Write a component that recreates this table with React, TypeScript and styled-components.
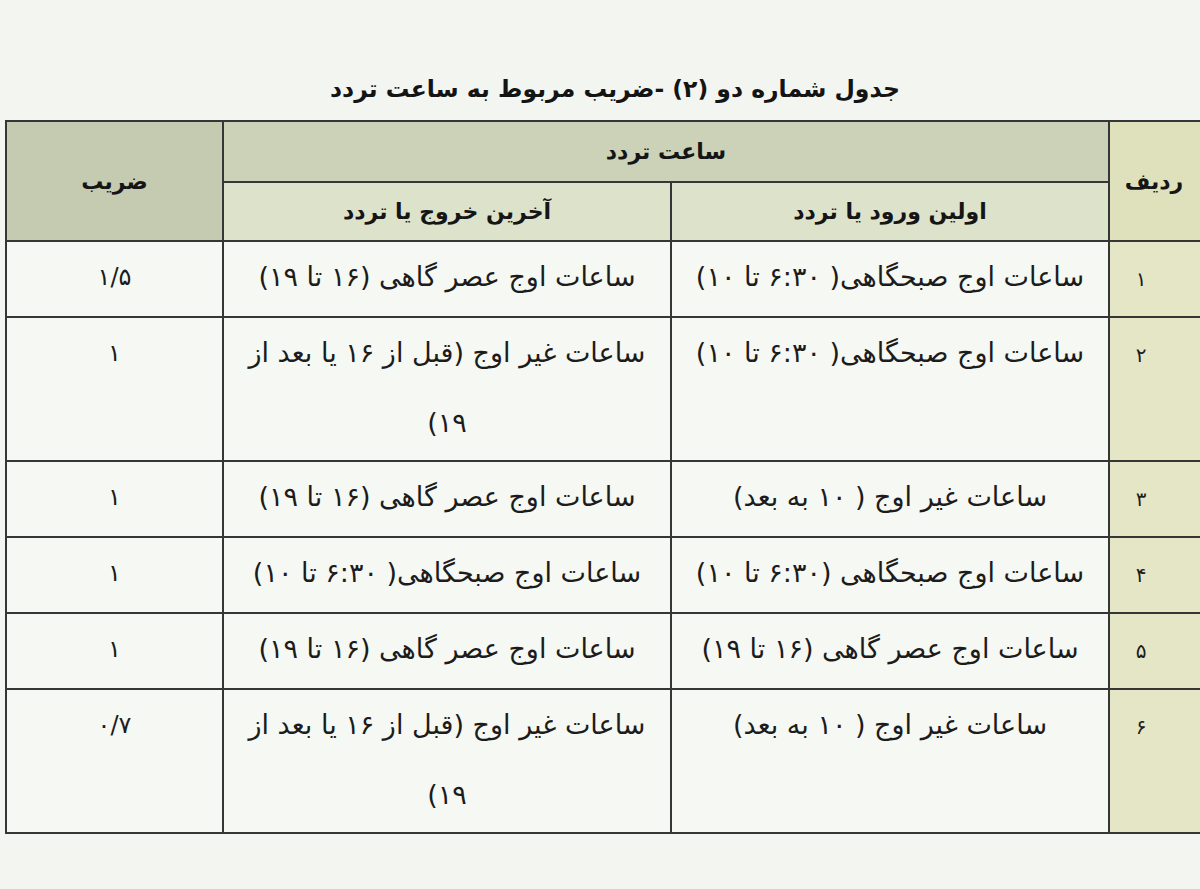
import React from "react";
import styled, { createGlobalStyle } from "styled-components";

const Global = createGlobalStyle`
  html, body {
    margin: 0;
    padding: 0;
    overflow: hidden;
    background: #f3f5f0;
  }
  body {
    font-family: "DejaVu Sans", "Noto Sans", sans-serif;
    color: #1f1f1f;
  }
`;

const Page = styled.div`
  width: 1200px;
  height: 889px;
  overflow: hidden;
  direction: ltr;
  padding-top: 72px;
  box-sizing: border-box;
`;

const Title = styled.h1`
  margin: 0 0 14px 0;
  padding-left: 30px;
  direction: rtl;
  text-align: center;
  font-size: 23.5px;
  font-weight: bold;
  line-height: 34px;
  color: #141414;
`;

const Table = styled.table`
  direction: rtl;
  border-collapse: collapse;
  table-layout: fixed;
  width: 1213px;
  margin-left: 5px;
  border: 2px solid #333;
`;

const HeadCell = styled.th<{ $tone: "dark" | "mid" | "light" | "yellow"; $h?: number }>`
  border: 2px solid #363636;
  font-size: 22px;
  font-weight: bold;
  color: #151515;
  text-align: center;
  vertical-align: middle;
  height: ${(p) => (p.$h ? `${p.$h}px` : "auto")};
  padding: 0;
  white-space: nowrap;
  background: ${(p) =>
    p.$tone === "dark"
      ? "#c4cbb0"
      : p.$tone === "mid"
      ? "#cbd2b7"
      : p.$tone === "light"
      ? "#dde2cb"
      : "#dfe1bd"};
`;

const RowHeadText = styled.span`
  display: inline-block;
  padding-right: 20px;
`;

const Cell = styled.td<{ $yellow?: boolean; $size?: number }>`
  border: 2px solid #363636;
  font-size: ${(p) => p.$size ?? 27}px;
  line-height: 70px;
  text-align: center;
  vertical-align: top;
  padding: 0 0 2px 0;
  background: ${(p) => (p.$yellow ? "#e4e6c6" : "#f6f8f3")};
  color: #1c1c1c;
`;

const Num = styled.span`
  display: inline-block;
  font-size: 20px;
  padding-right: 46px;
`;

const Line = styled.div`
  white-space: nowrap;
`;

type Row = { n: string; first: string[]; last: string[]; coef: string };

const rows: Row[] = [
  {
    n: "۱",
    first: ["ساعات اوج صبحگاهی( ۶:۳۰ تا ۱۰)"],
    last: ["ساعات اوج عصر گاهی (۱۶ تا ۱۹)"],
    coef: "۱/۵",
  },
  {
    n: "۲",
    first: ["ساعات اوج صبحگاهی( ۶:۳۰ تا ۱۰)"],
    last: ["ساعات غیر اوج (قبل از ۱۶ یا بعد از", "۱۹)"],
    coef: "۱",
  },
  {
    n: "۳",
    first: ["ساعات غیر اوج ( ۱۰ به بعد)"],
    last: ["ساعات اوج عصر گاهی (۱۶ تا ۱۹)"],
    coef: "۱",
  },
  {
    n: "۴",
    first: ["ساعات اوج صبحگاهی (۶:۳۰ تا ۱۰)"],
    last: ["ساعات اوج صبحگاهی( ۶:۳۰ تا ۱۰)"],
    coef: "۱",
  },
  {
    n: "۵",
    first: ["ساعات اوج عصر گاهی (۱۶ تا ۱۹)"],
    last: ["ساعات اوج عصر گاهی (۱۶ تا ۱۹)"],
    coef: "۱",
  },
  {
    n: "۶",
    first: ["ساعات غیر اوج ( ۱۰ به بعد)"],
    last: ["ساعات غیر اوج (قبل از ۱۶ یا بعد از", "۱۹)"],
    coef: "۰/۷",
  },
];

export default function App() {
  return (
    <>
      <Global />
      <Page>
        <Title>جدول شماره دو (۲) -ضریب مربوط به ساعت تردد</Title>
        <Table>
          <colgroup>
            <col style={{ width: 110 }} />
            <col style={{ width: 438 }} />
            <col style={{ width: 448 }} />
            <col style={{ width: 217 }} />
          </colgroup>
          <thead>
            <tr>
              <HeadCell $tone="yellow" rowSpan={2}>
                <RowHeadText>ردیف</RowHeadText>
              </HeadCell>
              <HeadCell $tone="mid" colSpan={2} $h={59}>
                ساعت تردد
              </HeadCell>
              <HeadCell $tone="dark" rowSpan={2}>
                ضریب
              </HeadCell>
            </tr>
            <tr>
              <HeadCell $tone="light" $h={57}>
                اولین ورود یا تردد
              </HeadCell>
              <HeadCell $tone="light" $h={57}>
                آخرین خروج یا تردد
              </HeadCell>
            </tr>
          </thead>
          <tbody>
            {rows.map((r) => (
              <tr key={r.n}>
                <Cell $yellow>
                  <Num>{r.n}</Num>
                </Cell>
                <Cell>
                  {r.first.map((l, i) => (
                    <Line key={i}>{l}</Line>
                  ))}
                </Cell>
                <Cell>
                  {r.last.map((l, i) => (
                    <Line key={i}>{l}</Line>
                  ))}
                </Cell>
                <Cell $size={24}>{r.coef}</Cell>
              </tr>
            ))}
          </tbody>
        </Table>
      </Page>
    </>
  );
}
